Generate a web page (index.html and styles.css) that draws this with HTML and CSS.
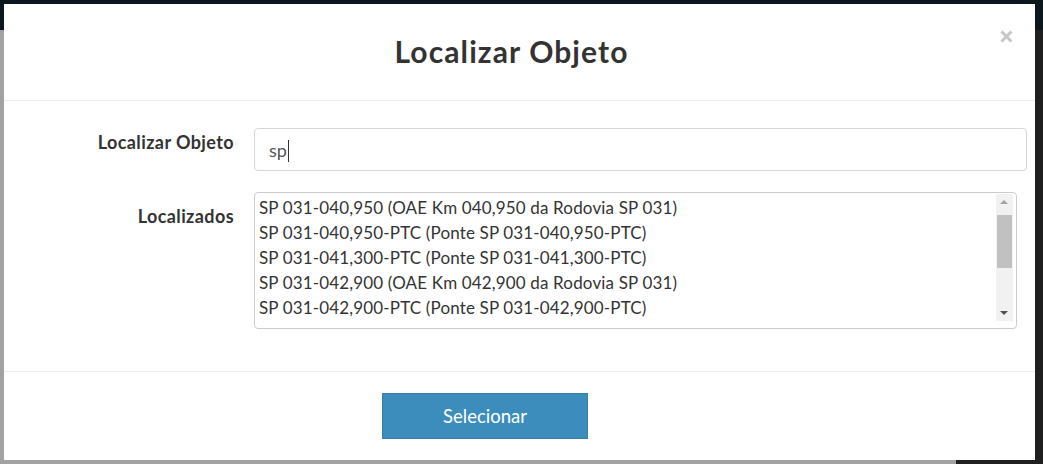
FILE: index.html
```html
<!DOCTYPE html>
<html lang="pt">
<head>
<meta charset="utf-8">
<title>Localizar Objeto</title>
<link rel="stylesheet" href="styles.css">
</head>
<body>
<div class="page">
  <div class="page-header"></div>
  <div class="page-main">
    <div class="page-content"></div>
    <div class="page-side"></div>
  </div>
</div>

<div class="modal">
  <div class="modal-header">
    <h4 class="modal-title">Localizar Objeto</h4>
    <button class="close" type="button" aria-label="Fechar">
      <svg width="13" height="13" viewBox="0 0 13 13"><path d="M1.5 1.5 L11.5 11.5 M11.5 1.5 L1.5 11.5" stroke="#c6c6c6" stroke-width="3" fill="none"/></svg>
    </button>
  </div>
  <div class="modal-body">
    <label class="field-label label-top">Localizar Objeto</label>
    <div class="text-input"><span class="typed">sp</span><span class="caret"></span></div>
    <label class="field-label label-list">Localizados</label>
    <div class="listbox">
      <ul class="options">
        <li>SP 031-040,950 (OAE Km 040,950 da Rodovia SP 031)</li>
        <li>SP 031-040,950-PTC (Ponte SP 031-040,950-PTC)</li>
        <li>SP 031-041,300-PTC (Ponte SP 031-041,300-PTC)</li>
        <li>SP 031-042,900 (OAE Km 042,900 da Rodovia SP 031)</li>
        <li>SP 031-042,900-PTC (Ponte SP 031-042,900-PTC)</li>
      </ul>
      <div class="scrollbar">
        <div class="arrow arrow-up"></div>
        <div class="track"><div class="thumb"></div></div>
        <div class="arrow arrow-down"></div>
      </div>
    </div>
  </div>
  <div class="modal-footer">
    <button class="btn-primary" type="button">Selecionar</button>
  </div>
</div>
</body>
</html>
```
FILE: styles.css
```css
* { box-sizing: border-box; }
html, body { margin: 0; padding: 0; }
body {
  width: 1043px;
  height: 464px;
  overflow: hidden;
  background: #1f1f1f;
  font-family: Lato, "Open Sans", sans-serif;
  color: #333;
}

/* background page (dimmed) */
.page { display: flex; flex-direction: column; height: 464px; }
.page-header {
  height: 30px;
  background: #0b161d;
}
.page-main { flex: 1; display: flex; }
.page-content { width: 956px; background: #a2a2a2; }
.page-side { flex: 1; background: #1f1f1f; }

/* modal */
.modal {
  position: fixed;
  left: 4px;
  top: 4px;
  width: 1031px;
  height: 456px;
  background: #fff;
  display: flex;
  flex-direction: column;
}
.modal-header {
  position: relative;
  height: 97px;
  border-bottom: 1px solid #eee;
  display: flex;
  align-items: center;
  justify-content: center;
}
.modal-title {
  margin: 0;
  font-size: 30px;
  letter-spacing: 1.1px;
  font-weight: 700;
  color: #333;
  padding-bottom: 2px;
  padding-right: 16px;
}
.close {
  position: absolute;
  top: 26px;
  right: 22px;
  width: 13px;
  height: 13px;
  padding: 0;
  border: 0;
  background: none;
  display: block;
}
.close svg { display: block; }

.modal-body {
  height: 271px;
  border-bottom: 1px solid #eee;
  padding: 27px 8px 0 0;
  display: grid;
  grid-template-columns: 230px 1fr;
  column-gap: 20px;
  row-gap: 21px;
  align-content: start;
}
.field-label {
  font-size: 18px;
  letter-spacing: 0.4px;
  font-weight: 700;
  color: #333;
  text-align: right;
  line-height: 22px;
}
.label-top { padding-top: 3px; }
.label-list { padding-top: 13px; }

.text-input {
  height: 43px;
  border: 1px solid #d2d6de;
  border-radius: 4px;
  padding: 0 14px;
  display: flex;
  align-items: center;
  font-size: 18px;
  color: #555;
}
.caret {
  display: inline-block;
  width: 1px;
  height: 22px;
  background: #333;
  margin-left: 1px;
  margin-top: 2px;
}

.listbox {
  height: 137px;
  margin-right: 10px;
  border: 1px solid #ccc;
  border-radius: 4px;
  display: flex;
  padding: 1px 3px 7px 4px;
}
.options {
  list-style: none;
  margin: 0;
  padding: 1px 0 0 0;
  flex: 1;
  font-size: 17px;
  letter-spacing: 0.15px;
  line-height: 25px;
  color: #333;
  white-space: nowrap;
  overflow: hidden;
}
.scrollbar {
  width: 17px;
  background: #f1f1f1;
  display: flex;
  flex-direction: column;
}
.arrow { height: 17px; position: relative; }
.arrow::after {
  content: "";
  position: absolute;
  left: 4px;
  top: 6px;
  border-left: 4px solid transparent;
  border-right: 4px solid transparent;
}
.arrow-up::after { border-bottom: 4px solid #a3a3a3; }
.arrow-down::after { border-top: 4px solid #505050; top: 7px; }
.track { flex: 1; padding: 4px 1px 0 1px; }
.thumb { height: 53px; background: #c1c1c1; }

.modal-footer {
  flex: 1;
  display: flex;
  align-items: flex-start;
  padding: 21px 0 0 378px;
}
.btn-primary {
  width: 206px;
  height: 46px;
  background: #3c8dbc;
  border: 1px solid #367fa9;
  color: #fff;
  font-family: Lato, "Open Sans", sans-serif;
  font-size: 18.5px;
  padding: 0;
}
```
